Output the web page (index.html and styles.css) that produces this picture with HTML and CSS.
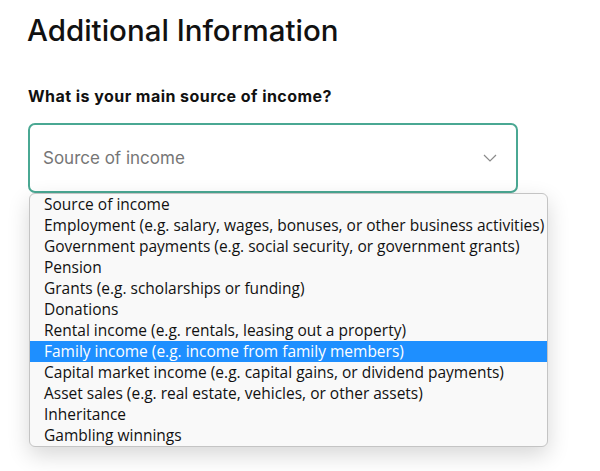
FILE: index.html
```html
<!DOCTYPE html>
<html lang="en">
<head>
<meta charset="utf-8">
<title>Additional Information</title>
<link rel="stylesheet" href="styles.css">
</head>
<body>
<main class="page">
  <h1 class="title">Additional Information</h1>
  <div class="label">What is your main source of income?</div>
  <div class="field">
    <div class="select">
      <span class="placeholder">Source of income</span>
      <svg class="chevron" width="14" height="8" viewBox="0 0 14 8" aria-hidden="true"><path d="M1 1 L7 7 L13 1" fill="none" stroke="#8a8a8a" stroke-width="1.2"/></svg>
    </div>
    <div class="menu" role="listbox">
      <div class="option">Source of income</div>
      <div class="option">Employment (e.g. salary, wages, bonuses, or other business activities)</div>
      <div class="option">Government payments (e.g. social security, or government grants)</div>
      <div class="option">Pension</div>
      <div class="option">Grants (e.g. scholarships or funding)</div>
      <div class="option">Donations</div>
      <div class="option">Rental income (e.g. rentals, leasing out a property)</div>
      <div class="option option-active">Family income (e.g. income from family members)</div>
      <div class="option">Capital market income (e.g. capital gains, or dividend payments)</div>
      <div class="option">Asset sales (e.g. real estate, vehicles, or other assets)</div>
      <div class="option">Inheritance</div>
      <div class="option">Gambling winnings</div>
    </div>
  </div>
</main>
</body>
</html>
```
FILE: styles.css
```css
html, body {
  margin: 0;
  padding: 0;
  background: #ffffff;
}
body {
  min-height: 471px;
}
.page {
  min-height: 471px;
  box-sizing: border-box;
  padding: 12px 0 0 28px;
  font-family: Inter, "Liberation Sans", sans-serif;
  color: #111111;
}
.title {
  margin: 0;
  font-size: 29.5px;
  line-height: 36px;
  font-weight: 500;
  margin-left: -1px;
}
.label {
  margin-top: 38px;
  font-size: 16px;
  line-height: 20px;
  font-weight: 700;
  letter-spacing: 0.45px;
}
.field {
  position: relative;
  margin-top: 17px;
  width: 490px;
}
.select {
  box-sizing: border-box;
  height: 70px;
  border: 2px solid #4aa893;
  border-radius: 7px;
  display: flex;
  align-items: center;
  justify-content: space-between;
  padding: 0 19px 0 13px;
}
.placeholder {
  font-size: 17px;
  color: #767676;
}
.chevron {
  display: block;
}
.menu {
  position: absolute;
  left: 1px;
  top: 70px;
  width: 519px;
  box-sizing: border-box;
  padding: 0;
  background: #f9f9f9;
  border: 1px solid #c4c4c4;
  border-radius: 6px;
  box-shadow: 0 8px 22px rgba(0, 0, 0, 0.16);
  font-family: "Open Sans", sans-serif;
  font-size: 15.5px;
  color: #111111;
  z-index: 2;
}
.option {
  height: 21px;
  line-height: 21px;
  padding-left: 14px;
  white-space: nowrap;
}
.option-active {
  background: #1e8fff;
  color: #ffffff;
}
```
